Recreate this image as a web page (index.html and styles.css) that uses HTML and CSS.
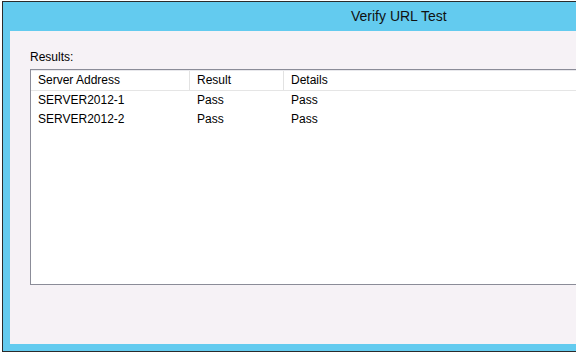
FILE: index.html
```html
<!DOCTYPE html>
<html lang="en">
<head>
    <meta charset="UTF-8">
    <title>Verify URL Test</title>
    <link rel="stylesheet" href="styles.css">
</head>
<body>
    <div class="window">
        <div class="titlebar">Verify URL Test</div>
        <div class="content">
            <div class="label">Results:</div>
            <div class="listbox">
                <div class="row header">
                    <div class="cell">Server Address</div>
                    <div class="cell">Result</div>
                    <div class="cell">Details</div>
                </div>
                <div class="row">
                    <div class="cell">SERVER2012-1</div>
                    <div class="cell">Pass</div>
                    <div class="cell">Pass</div>
                </div>
                <div class="row">
                    <div class="cell">SERVER2012-2</div>
                    <div class="cell">Pass</div>
                    <div class="cell">Pass</div>
                </div>
            </div>
        </div>
    </div>
</body>
</html>
```

FILE: styles.css
```css
body {
    font-family: 'Liberation Sans', Arial, sans-serif;
    font-size: 12px;
    margin: 0;
    background-color: #ffffff;
    color: #000;
    overflow: hidden;
}

.window {
    margin: 1px 0 0 2px;
    height: 349px;
    background-color: #63cbef;
    border-top: 1px solid #2b2b2b;
    border-left: 1px solid #2b2b2b;
    border-bottom: 1px solid #2b2b2b;
    padding-left: 7px;
    display: flex;
    flex-direction: column;
}

.titlebar {
    height: 29px;
    line-height: 29px;
    font-size: 14px;
    padding-left: 341px;
    color: #111;
}

.content {
    background-color: #f6f2f6;
    height: 313px;
    padding: 19px 0 0 20px;
    box-sizing: border-box;
}

.label {
    line-height: 15px;
    margin-bottom: 4px;
}

.listbox {
    background-color: #fff;
    border: 1px solid #8b8c98;
    border-right: none;
    height: 214px;
}

.row {
    display: grid;
    grid-template-columns: 159px 94px 1fr;
    height: 19px;
    line-height: 19px;
}

.row .cell {
    padding-left: 7px;
}

.header {
    height: 19px;
    line-height: 19px;
    border-top: 1px solid #e8e8ec;
    border-bottom: 1px solid #e5e5e5;
}

.header .cell {
    border-right: 1px solid #e2e2e2;
}

.header .cell:last-child {
    border-right: none;
}
```
